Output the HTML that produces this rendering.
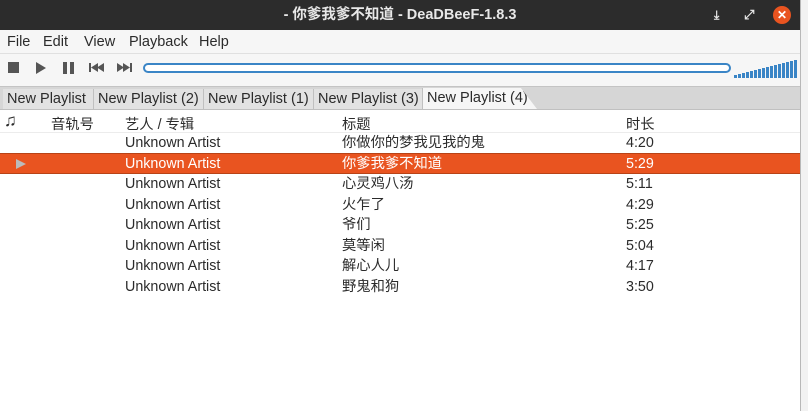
<!DOCTYPE html>
<html><head><meta charset="utf-8"><style>
body{margin:0;width:808px;height:411px;overflow:hidden;background:#f2f2f2;font-family:"Liberation Sans","Noto Sans CJK SC",sans-serif;font-size:14px;color:#2b2b2b;position:relative}
.win{position:absolute;left:0;top:0;width:800px;height:411px;background:#fff;border-right:1px solid #b8b8b8}
.title{position:absolute;left:0;top:0;width:800px;height:30px;background:#2c2c2c;color:#e8e8e8;font-weight:bold;font-size:14.5px;line-height:30px;text-align:center}
.menu{position:absolute;top:30px;left:0;width:800px;height:23px;background:#f6f6f6;border-bottom:1px solid #e0e0e0}
.menu span{position:absolute;top:4px;font-size:14.5px}
.tb{position:absolute;top:54px;left:0;width:800px;height:32px;background:#f6f6f6}
.tabs{position:absolute;top:86px;left:0;width:800px;height:22px;background:#d6d6d6;border-top:1px solid #c4c4c4;border-bottom:1px solid #c0c0c0}
.tab{position:absolute;top:2px;height:20px;background:#e2e2e2;border-left:1px solid #c0c0c0;font-size:14.5px;line-height:20px;padding-left:4px;box-sizing:border-box}
.hdr{position:absolute;top:110px;left:0;width:800px;height:22px;background:#fff;border-bottom:1px solid #ececec}
.hdr span,.row span{position:absolute;font-size:14.3px}
.row{position:absolute;left:0;width:800px;height:20.5px;line-height:20.5px}
.sel{background:#e95420;color:#fff;border-top:1px solid #b84317;border-bottom:1px solid #b84317;box-sizing:border-box}
</style></head><body>
<div class="win">
<div class="title">- 你爹我爹不知道 - DeaDBeeF-1.8.3
<span style="position:absolute;left:714px;top:0;font-size:12px">⤓</span>
<span style="position:absolute;left:744px;top:0;font-size:13px">⤢</span>
<span style="position:absolute;left:773px;top:6px;width:18px;height:18px;border-radius:50%;background:#e95420;color:#fff;line-height:18px;font-size:12px">✕</span></div>
<div class="menu"><span style="left:7px">File</span><span style="left:43px">Edit</span><span style="left:84px">View</span><span style="left:129px">Playback</span><span style="left:199px">Help</span></div>
<div class="tb">
<div style="position:absolute;left:8px;top:8px;width:11px;height:11px;background:#555"></div>
<svg style="position:absolute;left:35px;top:8px" width="12" height="12"><path d="M1 0L11 6L1 12Z" fill="#555"/></svg>
<div style="position:absolute;left:63px;top:8px;width:4px;height:12px;background:#555"></div><div style="position:absolute;left:70px;top:8px;width:4px;height:12px;background:#555"></div>
<svg style="position:absolute;left:89px;top:9px" width="16" height="9"><rect x="0" y="0" width="2" height="9" fill="#555"/><path d="M2 4.5L9 0V9Z M8 4.5L15 0V9Z" fill="#555"/></svg>
<svg style="position:absolute;left:117px;top:9px" width="16" height="9"><path d="M0 0L7 4.5L0 9Z M6 0L13 4.5L6 9Z" fill="#555"/><rect x="13" y="0" width="2" height="9" fill="#555"/></svg>
<div style="position:absolute;left:143px;top:9px;width:584px;height:6px;border:2px solid #3a85c6;border-radius:5px;background:#fff"></div>
<svg style="position:absolute;left:734px;top:3px" width="64" height="22">
<g fill="#3a85c6">
<rect x="0" y="18" width="3" height="3"/><rect x="4" y="17" width="3" height="4"/><rect x="8" y="16" width="3" height="5"/><rect x="12" y="15" width="3" height="6"/><rect x="16" y="14" width="3" height="7"/><rect x="20" y="13" width="3" height="8"/><rect x="24" y="12" width="3" height="9"/><rect x="28" y="11" width="3" height="10"/><rect x="32" y="10" width="3" height="11"/><rect x="36" y="9" width="3" height="12"/><rect x="40" y="8" width="3" height="13"/><rect x="44" y="7" width="3" height="14"/><rect x="48" y="6" width="3" height="15"/><rect x="52" y="5" width="3" height="16"/><rect x="56" y="4" width="3" height="17"/><rect x="60" y="3" width="3" height="18"/></g></svg>
</div>
<div class="tabs">
<div class="tab" style="left:3px;width:90px;border-left:none">New Playlist</div>
<div class="tab" style="left:93px;width:110px">New Playlist (2)</div>
<div class="tab" style="left:203px;width:110px">New Playlist (1)</div>
<div class="tab" style="left:313px;width:110px">New Playlist (3)</div>
<div class="tab" style="left:422px;width:115px;background:#f6f6f6;top:1px;height:21px;clip-path:polygon(0 0,86% 0,100% 100%,0 100%)">New Playlist (4)</div>
</div>
<div class="hdr"><span style="left:4px;top:1px;font-size:17px">♫</span><span style="left:51px;top:3px">音轨号</span><span style="left:125px;top:3px">艺人 / 专辑</span><span style="left:342px;top:3px">标题</span><span style="left:626px;top:3px">时长</span></div>
<div class="row" style="top:133px"><span style="left:125px">Unknown Artist</span><span style="left:342px">你做你的梦我见我的鬼</span><span style="left:626px">4:20</span></div>
<div class="row sel" style="top:153px"><svg style="position:absolute;left:16px;top:5px" width="10" height="10"><path d="M0 0L10 5L0 10Z" fill="#bbb"/></svg><span style="left:125px">Unknown Artist</span><span style="left:342px">你爹我爹不知道</span><span style="left:626px">5:29</span></div>
<div class="row" style="top:174px"><span style="left:125px">Unknown Artist</span><span style="left:342px">心灵鸡八汤</span><span style="left:626px">5:11</span></div>
<div class="row" style="top:194.5px"><span style="left:125px">Unknown Artist</span><span style="left:342px">火乍了</span><span style="left:626px">4:29</span></div>
<div class="row" style="top:215px"><span style="left:125px">Unknown Artist</span><span style="left:342px">爷们</span><span style="left:626px">5:25</span></div>
<div class="row" style="top:235.5px"><span style="left:125px">Unknown Artist</span><span style="left:342px">莫等闲</span><span style="left:626px">5:04</span></div>
<div class="row" style="top:256px"><span style="left:125px">Unknown Artist</span><span style="left:342px">解心人儿</span><span style="left:626px">4:17</span></div>
<div class="row" style="top:276.5px"><span style="left:125px">Unknown Artist</span><span style="left:342px">野鬼和狗</span><span style="left:626px">3:50</span></div>
</div>
</body></html>
